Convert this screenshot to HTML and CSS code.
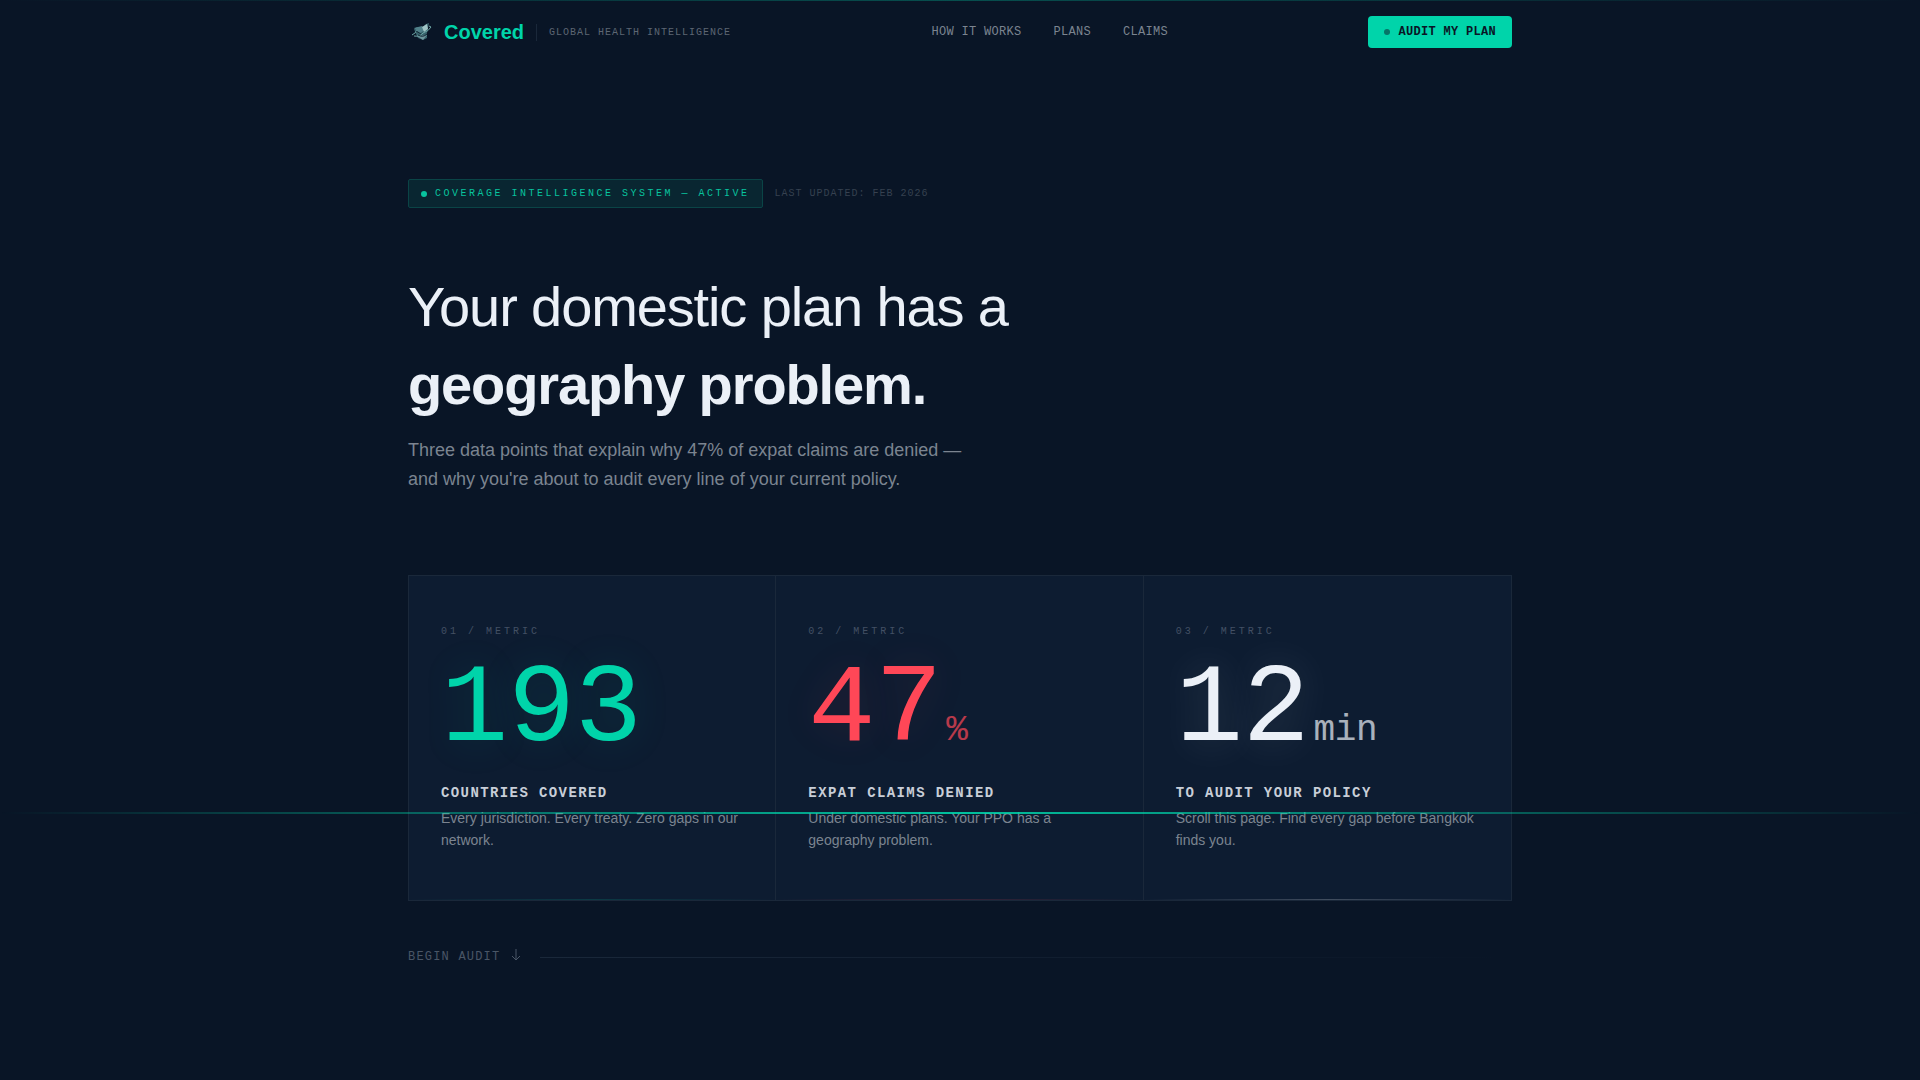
FILE: index.html
```html
<!DOCTYPE html>
<html lang="en">
	<head>
		<meta charset="UTF-8">
		<meta name="viewport" content="width=device-width, initial-scale=1">
		<title>Covered</title>
		<link rel="stylesheet" href="styles.css">
	</head>
	<body>
		<header class="header">
			<div class="container nav">
				<div class="brand">
					<a href="#" class="logo">
						<svg class="logo-icon" viewBox="0 0 28 28" aria-hidden="true">
							<path d="M6 11 L9 9 L15 9 L18 6 L21 5 L20 10 L19 15 L19 20 L15 22 L10 20 L8 16 Z" fill="#38636c"/>
							<path d="M6 10 L14 8 L17 12 L12 15 Z" fill="#51818a"/>
							<path d="M14 9 L19 6 L20 11 L16 14 Z" fill="#a0c4c5"/>
							<path d="M4 17 Q8 15 9 12 M6 18 Q12 19 15 15 Q21 13 23 9 L21 8" fill="none" stroke="#6fa9a8" stroke-width="1"/>
							<path d="M9 18 L19 17 L15 22 Z" fill="#6e969d"/>
							<path d="M8 13 L13 16 M10 17 Q15 20 19 16" fill="none" stroke="#132936" stroke-width="1"/>
						</svg>
						<span>Covered</span>
					</a>
					<span class="tagline">GLOBAL HEALTH INTELLIGENCE</span>
				</div>
				<nav class="menu">
					<a href="#how">HOW IT WORKS</a>
					<a href="#plans">PLANS</a>
					<a href="#claims">CLAIMS</a>
				</nav>
				<button type="button" class="cta"><span class="dot"></span>AUDIT MY PLAN</button>
			</div>
		</header>

		<main class="container hero">
			<div class="status">
				<div class="badge"><span class="dot"></span>COVERAGE INTELLIGENCE SYSTEM — ACTIVE</div>
				<span class="updated">LAST UPDATED: FEB 2026</span>
			</div>

			<h1>Your domestic plan has a<br><strong>geography problem.</strong></h1>
			<p class="lead">Three data points that explain why 47% of expat claims are denied —<br>and why you're about to audit every line of your current policy.</p>

			<section class="metrics">
				<article class="metric teal">
					<div class="index">01 / METRIC</div>
					<div class="value"><span class="number">193</span></div>
					<h2>COUNTRIES COVERED</h2>
					<p>Every jurisdiction. Every treaty. Zero gaps in our network.</p>
				</article>
				<article class="metric red">
					<div class="index">02 / METRIC</div>
					<div class="value"><span class="number">47</span><span class="unit">%</span></div>
					<h2>EXPAT CLAIMS DENIED</h2>
					<p>Under domestic plans. Your PPO has a geography problem.</p>
				</article>
				<article class="metric white">
					<div class="index">03 / METRIC</div>
					<div class="value"><span class="number">12</span><span class="unit">min</span></div>
					<h2>TO AUDIT YOUR POLICY</h2>
					<p>Scroll this page. Find every gap before Bangkok finds you.</p>
				</article>
			</section>

			<div class="begin">
				<span>BEGIN AUDIT</span>
				<svg class="arrow" viewBox="0 0 16 16" aria-hidden="true">
					<path d="M8 0 V11 M4 7 L8 11 L12 7" fill="none" stroke="currentColor"/>
				</svg>
				<span class="rule"></span>
			</div>
		</main>

		<div class="scanline"></div>
	</body>
</html>
```
FILE: styles.css
```css
*{
	margin: 0;
	padding: 0;
	box-sizing: border-box;
}
:root{
	--bg: #091526;
	--card: #0d1c31;
	--line: #1a283a;
	--teal: #00d4aa;
	--red: #ff4757;
	--white: #ebf0f7;
	--mono: "Liberation Mono", monospace;
}
body{
	min-height: 100vh;
	background: var(--bg);
	color: var(--white);
	font-family: "Liberation Sans", sans-serif;
}
a{
	color: inherit;
	text-decoration: none;
}
.container{
	max-width: 1200px;
	margin: 0 auto;
	padding: 0 48px;
}
.dot{
	width: 6px;
	height: 6px;
	border-radius: 50%;
	background: currentColor;
}

/* header */
.header{
	height: 64px;
	background: linear-gradient(90deg, transparent, #00d4aa4d, transparent) top / 100% 1px no-repeat;
}
.nav{
	height: 64px;
	display: flex;
	align-items: center;
	justify-content: space-between;
}
.brand,
.logo{
	display: flex;
	align-items: center;
}
.brand{
	gap: 12px;
}
.logo{
	gap: 8px;
	color: var(--teal);
	font-size: 20px;
	font-weight: 700;
}
.logo-icon{
	width: 28px;
	height: 28px;
}
.tagline{
	padding-left: 12px;
	border-left: 1px solid var(--line);
	font: 10px/17px var(--mono);
	letter-spacing: 0.1em;
	color: #5d6673;
}
.menu{
	display: flex;
	gap: 32px;
	font: 12px/16px var(--mono);
	letter-spacing: 0.025em;
	color: #7b8490;
}
.cta{
	display: flex;
	align-items: center;
	gap: 8px;
	padding: 8px 16px;
	border: 0;
	border-radius: 4px;
	background: var(--teal);
	color: var(--bg);
	font: bold 12px/16px var(--mono);
	letter-spacing: 0.025em;
}
.cta .dot{
	opacity: 0.5;
}

/* hero */
.hero{
	padding-top: 115px;
	padding-bottom: 96px;
}
.status{
	display: flex;
	align-items: center;
	gap: 12px;
	font: 10px/15px var(--mono);
}
.badge{
	display: flex;
	align-items: center;
	gap: 8px;
	padding: 6px 12px;
	border: 1px solid #0a4446;
	border-radius: 2px;
	background: #092631;
	color: #08c39f;
	letter-spacing: 0.25em;
}
.updated{
	color: #364150;
	letter-spacing: 0.1em;
}
h1{
	margin-top: 60px;
	font-size: 56px;
	line-height: 78px;
	font-weight: 400;
	letter-spacing: -0.02em;
}
.lead{
	margin-top: 12px;
	font-size: 18px;
	line-height: 29px;
	color: #7b8490;
}

/* metrics */
.metrics{
	display: grid;
	grid-template-columns: repeat(3, 1fr);
	margin-top: 81px;
	border: 1px solid var(--line);
}
.metric{
	padding: 48px 32px 49px;
	border-right: 1px solid var(--line);
	background: linear-gradient(90deg, transparent, var(--glow), transparent) bottom / 100% 1px no-repeat, var(--card);
}
.metric:last-child{
	border-right: 0;
}
.teal{
	--glow: #00d4aa2a;
}
.red{
	--glow: #ff47572a;
}
.white{
	--glow: #f0f4fa3a;
}
.index{
	font: 10px/15px var(--mono);
	letter-spacing: 0.3em;
	color: #435064;
}
.value{
	margin-top: 16px;
	font-family: var(--mono);
	letter-spacing: -0.02em;
}
.number{
	font-size: 112px;
	line-height: 112px;
}
.unit{
	margin-left: 4px;
	font-size: 36px;
	opacity: 0.7;
}
.teal .value{
	color: var(--teal);
}
.red .value{
	color: var(--red);
}
.teal .number{
	text-shadow: 0 0 40px #00d4aa22;
}
.red .number{
	text-shadow: 0 0 40px #ff475722;
}
.white .number{
	text-shadow: 0 0 40px #f0f4fa28;
}
.metric h2{
	margin-top: 16px;
	font: bold 14px/20px var(--mono);
	letter-spacing: 0.1em;
	color: #c8ced8;
}
.metric p{
	margin-top: 4px;
	font-size: 14px;
	line-height: 22px;
	color: #7b8490;
}

/* scroll cue */
.begin{
	display: flex;
	align-items: center;
	gap: 8px;
	margin-top: 48px;
	font: 12px/16px var(--mono);
	letter-spacing: 0.1em;
	color: #4a5666;
}
.arrow{
	width: 16px;
	height: 16px;
}
.rule{
	flex: 1;
	height: 1px;
	margin-left: 8px;
	background: linear-gradient(90deg, var(--line), transparent);
}

.scanline{
	position: fixed;
	left: 0;
	right: 0;
	top: 75.2vh;
	height: 2px;
	background: linear-gradient(90deg, transparent, var(--teal), transparent);
	opacity: 0.9;
	pointer-events: none;
}
```
